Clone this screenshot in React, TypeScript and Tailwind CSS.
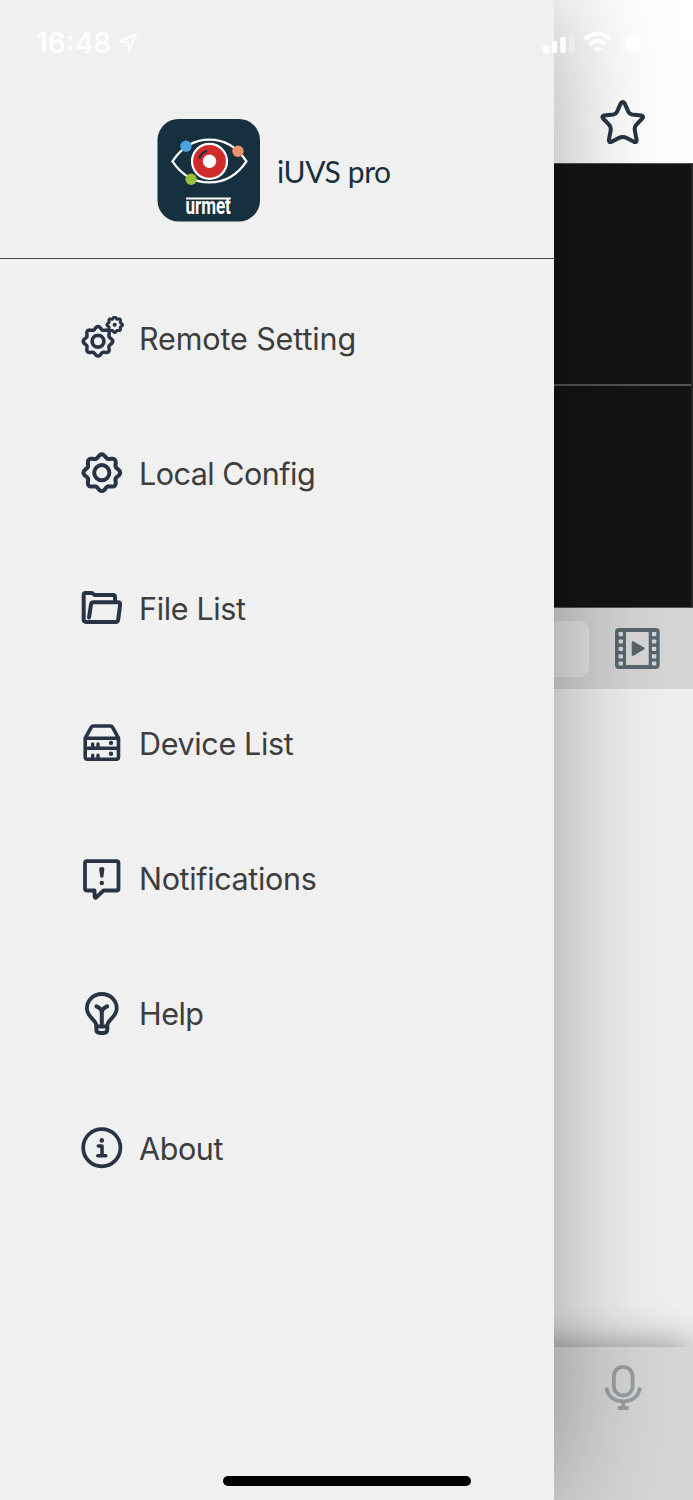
import React from 'react';

// Closed wavy outline with eight soft teeth
const gearPath = (cx: number, cy: number, radius: number, depth: number) => {
  const points: string[] = [];
  for (let i = 0; i < 96; i++) {
    const a = (i / 96) * Math.PI * 2;
    const r = radius + depth * Math.cos(a * 8);
    points.push(`${(cx + r * Math.cos(a)).toFixed(2)} ${(cy + r * Math.sin(a)).toFixed(2)}`);
  }
  return `M${points.join('L')}Z`;
};

const Icon: React.FC<{ children: React.ReactNode }> = ({ children }) => (
  <svg
    viewBox="0 0 45 45"
    className="w-[45px] h-[45px] shrink-0 text-[#283445]"
    fill="none"
    stroke="currentColor"
    strokeWidth={4}
    strokeLinecap="round"
    strokeLinejoin="round"
  >
    {children}
  </svg>
);

const MENU_ITEMS = [
  {
    label: 'Remote Setting',
    spacing: 'tracking-[-0.12px]',
    icon: (
      <>
        <path d={gearPath(18, 25.3, 13.4, 1.4)} strokeWidth={3.5} />
        <circle cx="18" cy="25.3" r="5.9" strokeWidth={3.7} />
        <path d={gearPath(34.7, 8.8, 6.9, 0.8)} strokeWidth={3} />
        <circle cx="34.7" cy="8.8" r="2.1" fill="currentColor" stroke="none" />
      </>
    ),
  },
  {
    label: 'Local Config',
    spacing: 'tracking-[-0.52px]',
    icon: (
      <>
        <path d={gearPath(21.8, 21.7, 16.7, 1.7)} />
        <circle cx="21.8" cy="21.7" r="7.6" />
      </>
    ),
  },
  {
    label: 'File List',
    spacing: 'tracking-[-0.35px]',
    icon: (
      <path d="M9 31.5L11 18.5Q11.3 16.3 13.5 16.3H38Q40.4 16.3 40.1 18.7L38.2 33.5Q37.9 36 35.5 36H6Q3.7 36 3.7 33.7V9Q3.7 7 5.7 7H12L14.5 9H33Q35 9 35 11V14.5" />
    ),
  },
  {
    label: 'Device List',
    spacing: 'tracking-[-0.35px]',
    icon: (
      <>
        <path d="M5.2 17.2L11.2 6.4Q12 5 13.6 5H30.2Q31.8 5 32.6 6.4L38.5 17.2V36Q38.5 38.3 36.2 38.3H7.5Q5.2 38.3 5.2 36ZM5.2 17.2H38.5M5.2 27.2H38.5" strokeWidth={3.6} />
        <path d="M12.7 23V26M18 23V26M12.7 34.3V37M18 34.3V37" strokeWidth={3.4} />
        <circle cx="31" cy="21.9" r="2.2" fill="currentColor" stroke="none" />
        <circle cx="31" cy="32.8" r="2.2" fill="currentColor" stroke="none" />
      </>
    ),
  },
  {
    label: 'Notifications',
    spacing: 'tracking-[-0.35px]',
    icon: (
      <>
        <path d="M7 5.2H36.5Q38.5 5.2 38.5 7.2V32.5Q38.5 34.5 36.5 34.5H23.5L16 41.6Q14.6 42.4 14.6 40.6V34.5H7Q5 34.5 5 32.5V7.2Q5 5.2 7 5.2Z" strokeWidth={3.8} />
        <path d="M19.2 13Q19.2 11 21.8 11T24.4 13L23.4 20.5Q23.1 21.8 21.8 21.8T20.2 20.5Z" fill="currentColor" stroke="none" />
        <circle cx="21.8" cy="27" r="2.2" fill="currentColor" stroke="none" />
      </>
    ),
  },
  {
    label: 'Help',
    spacing: 'tracking-[-0.5px]',
    icon: (
      <>
        <path d="M16.2 35.5V34C16.2 29.5 6.9 25.5 6.9 17.4C6.9 9.2 13.5 3 21.8 3S36.7 9.2 36.7 17.4C36.7 25.5 27.4 29.5 27.4 34V38Q27.4 42 23.4 42H20.2Q16.2 42 16.2 38ZM16.2 35.5H27.4" strokeWidth={3.8} />
        <path d="M16.5 15.4C19 16.5 21.8 18.5 21.8 21.5C21.8 18.5 24.6 16.5 27.1 15.4M21.8 20V34" />
      </>
    ),
  },
  {
    label: 'About',
    spacing: 'tracking-[-0.4px]',
    icon: (
      <>
        <circle cx="21.8" cy="21.7" r="18.6" strokeWidth={3.7} />
        <circle cx="21.8" cy="14.4" r="2.3" fill="currentColor" stroke="none" />
        <path d="M18.3 20H22V29.7M17.8 29.7H25.8" strokeWidth={3.6} />
      </>
    ),
  },
];

const AppLogo: React.FC = () => (
  <svg viewBox="0 0 103 103" className="w-[103px] h-[103px] shrink-0">
    <rect x="0.5" width="102.5" height="102.5" rx="21" fill="#17303f" />
    <path
      d="M15.5 42.3C25 28 38 20.6 52.3 20.6S80 28 89.4 42.3C80 56.5 67 63.4 52.3 63.4S25 56.5 15.5 42.3Z"
      fill="none"
      stroke="#fff"
      strokeWidth="2.3"
    />
    <circle cx="52.5" cy="42.3" r="17.5" fill="#cf2b28" stroke="#fff" strokeWidth="2.2" />
    <path d="M42.3 39.5Q43.8 33.5 50 32" fill="none" stroke="#17303f" strokeWidth="2.2" />
    <circle cx="52.5" cy="42.3" r="6.7" fill="#fff" />
    <circle cx="29" cy="27.3" r="5.7" fill="#4ba3de" />
    <circle cx="81" cy="32.3" r="5.7" fill="#e8936b" />
    <circle cx="34.1" cy="60.2" r="5.7" fill="#97bf3d" />
    <path d="M29 79.5H73.8" stroke="#fff" strokeWidth="2" />
    <text
      x="28.4"
      y="94.6"
      textLength="45.5"
      lengthAdjust="spacingAndGlyphs"
      fill="#fff"
      className="font-['Roboto',sans-serif] font-bold text-[24px]"
    >
      urmet
    </text>
  </svg>
);

const Drawer: React.FC = () => (
  <aside className="relative z-10 w-[554px] h-full shrink-0 bg-[#f0f0f0] shadow-[0_0_115px_rgba(0,0,0,0.36)]">
    <header className="h-[259px] border-b border-[#4a4a4a] flex items-start pt-[119px] pl-[157px]">
      <AppLogo />
      <h1 className="ml-[17px] mt-[31px] font-['Lato',sans-serif] text-[30px] leading-[42px] tracking-[-0.4px] text-[#17303f] whitespace-nowrap">
        iUVS pro
      </h1>
    </header>
    <nav className="pt-3">
      {MENU_ITEMS.map((item) => (
        <div key={item.label} className="h-[135px] pl-20 flex items-center">
          <Icon>{item.icon}</Icon>
          <span
            className={`ml-3.5 font-['Inter',sans-serif] text-[30.5px] leading-10 text-[#3d3d3d] whitespace-nowrap ${item.spacing}`}
          >
            {item.label}
          </span>
        </div>
      ))}
    </nav>
  </aside>
);

const LiveView: React.FC = () => (
  <main className="flex-1 h-full flex flex-col bg-[#f0f0f0]">
    <div className="h-[163px] bg-white pt-[99px] pl-[46px]">
      <svg viewBox="0 0 46 46" className="w-[46px] h-[46px]" fill="none" stroke="#283445" strokeWidth="4" strokeLinejoin="round">
        <path d="M20.8 4.2Q22.7 1.6 24.6 4.2L28.3 12.6Q29.4 15 32 15.5L41.3 16.5Q44.2 17.2 42.3 19.5L36.4 25.6Q34.4 27.8 34.7 30.7L36.6 40.8Q36.8 43.9 33.9 42.8L26.8 39.1Q22.7 37 18.6 39.1L11.5 42.8Q8.8 43.9 8.9 40.8L10.8 30.7Q11 27.8 9 25.6L3.1 19.5Q1.3 17.2 4.1 16.5L13.4 15.5Q16 15 17.1 12.6Z" />
      </svg>
    </div>
    <div className="h-[445px] bg-[#141414] border-r-2 border-[#292825] border-y border-y-[#555] flex flex-col">
      <div className="h-[222px] border-b-2 border-[#555]" />
      <div className="flex-1" />
    </div>
    <div className="h-[81px] bg-[#d6d6d6] flex items-center">
      <div className="w-[35px] h-14 rounded-r-[9px] bg-[#e5e5e5]" />
      <svg viewBox="0 0 45 41" className="ml-[26px] w-[45px] h-[41px]">
        <rect width="44.7" height="41" rx="4" fill="#59666d" />
        <rect x="11" y="4" width="22.7" height="33" fill="#d8d8d8" />
        {[4, 11.4, 18.8, 26.2, 33.4].map((y) => (
          <g key={y} fill="#d8d8d8">
            <rect x="3.6" y={y} width="4.4" height="4.2" rx="1" />
            <rect x="36.9" y={y} width="4.4" height="4.2" rx="1" />
          </g>
        ))}
        <path d="M17.8 14.3L28.5 20.5L17.8 26.7Z" fill="#59666d" stroke="#59666d" strokeWidth="2.2" strokeLinejoin="round" />
      </svg>
    </div>
    <div className="flex-1" />
    {/* runs on under the drawer so its shadow stays even at the left edge */}
    <footer className="h-[153px] -ml-10 bg-[#d6d6d6] shadow-[0_0_38px_rgba(0,0,0,0.45)] pt-[18px] pl-[90px]">
      <svg viewBox="0 0 38 46" className="w-[38px] h-[46px]" fill="none" stroke="#979ea1" strokeWidth="3.8">
        <rect x="9.8" y="1.9" width="18.8" height="28.6" rx="9.4" />
        <path d="M2.6 22.7C4 41 34.4 41 35.8 22.7M19.2 36.5V42" />
        <path d="M15.3 43H23.1" strokeLinecap="round" />
      </svg>
    </footer>
  </main>
);

const StatusBar: React.FC = () => (
  <div className="absolute z-20 top-0 inset-x-0 h-[84px] flex items-center text-white">
    <span className="ml-[36px] w-[82px] pt-px font-['Inter',sans-serif] font-semibold text-[28px] leading-8">16:48</span>
    <svg viewBox="0 0 20 20" className="w-5 h-5" fill="none" stroke="currentColor" strokeWidth="2" strokeLinejoin="round">
      <path d="M18 2L2 9.3L9.8 10.3L11.2 18Z" />
    </svg>
    <svg viewBox="0 0 120 24" className="ml-[404px] w-[120px] h-6" fill="currentColor">
      <rect x="1" y="15" width="6" height="8" rx="1.6" />
      <rect x="9.7" y="11" width="5.6" height="12" rx="1.6" />
      <rect x="18.3" y="7" width="5.6" height="16" rx="1.6" />
      <rect x="27" y="3" width="5.6" height="20" rx="1.6" opacity="0.3" />
      <g fill="none" stroke="currentColor" strokeWidth="4">
        <path d="M43 9.3Q55.6 -2 68.2 9.3" />
        <path d="M47.5 14.5Q55.6 7 63.7 14.5" />
      </g>
      <path d="M51.3 18.2Q55.6 14.8 59.9 18.2L55.6 22.6Z" />
      <rect x="80.5" y="2.5" width="37" height="20" rx="5.5" fill="none" stroke="currentColor" opacity="0.4" />
      <rect x="83" y="5.5" width="15.6" height="14" rx="3.5" />
    </svg>
  </div>
);

const App: React.FC = () => {
  return (
    <div className="relative w-[693px] h-[1500px] flex overflow-hidden bg-white">
      <Drawer />
      <LiveView />
      <StatusBar />
      <div className="absolute z-20 left-[223px] bottom-[14px] w-[248px] h-[10px] rounded-full bg-black" />
    </div>
  );
};

export default App;
